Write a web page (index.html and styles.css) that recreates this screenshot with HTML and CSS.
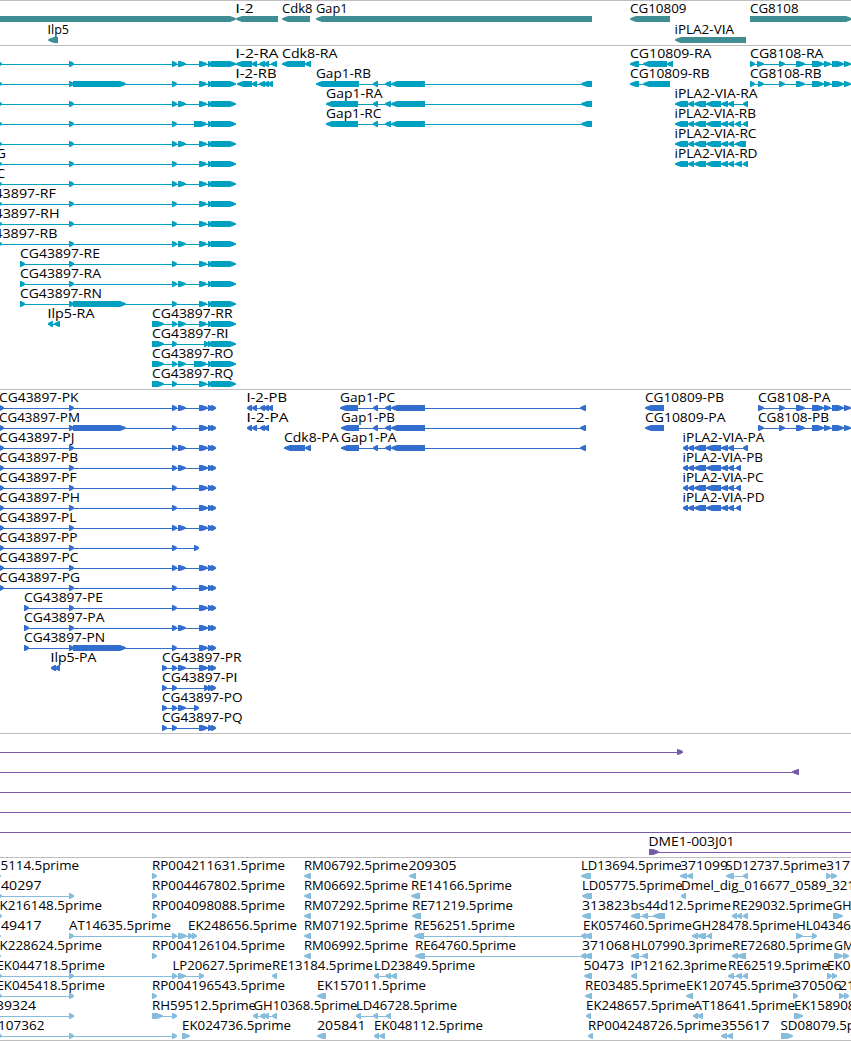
FILE: index.html
```html
<!DOCTYPE html>
<html lang="en">
<head>
<meta charset="utf-8">
<title>Genome tracks</title>
<link rel="stylesheet" href="styles.css">
</head>
<body>
<main class="browser">
  <section class="track track-genes"><svg id="genes" width="851" height="44"></svg></section>
  <section class="track track-transcripts"><svg id="transcripts" width="851" height="343"></svg></section>
  <section class="track track-cds"><svg id="cds" width="851" height="343"></svg></section>
  <section class="track track-clones"><svg id="clones" width="851" height="123"></svg></section>
  <section class="track track-ests"><svg id="ests" width="851" height="182"></svg></section>
</main>
<script src="tracks.js"></script>
</body>
</html>
```
FILE: styles.css
```css
body {
  margin: 0;
  background: #fff;
}

.browser {
  display: flex;
  flex-direction: column;
  width: 851px;
  height: 1041px;
  overflow: hidden;
  box-sizing: border-box;
  border-bottom: 1px solid #bebebe;
}

.track {
  flex: none;
  border-top: 1px solid #bebebe;
}

.track svg {
  display: block;
  overflow: hidden;
}

.track-genes { color: #408e94; }
.track-transcripts { color: #00a0c0; }
.track-cds { color: #326ecd; }
.track-clones { color: #785aaa; }
.track-ests { color: #87bddc; }

.label {
  font-family: "Open Sans", "DejaVu Sans", sans-serif;
  font-size: 12.5px;
  fill: #000;
}

.stem {
  font-family: "Liberation Sans", sans-serif;
}

.glyph {
  fill: currentColor;
}
```
FILE: tracks.js
```javascript
// Feature: row | strand | exons "a_b a_b" | label | label x | label end | line [a, b]
const F = (row, strand, exons, label, lx, le, line) => ({ row, strand, exons, label, lx, le, line });

const NS = 'http://www.w3.org/2000/svg';
function add(svg, name, attrs, text) {
  const el = document.createElementNS(NS, name);
  for (const k in attrs) el.setAttribute(k, attrs[k]);
  if (text) el.textContent = text;
  svg.appendChild(el);
  return el;
}

function draw(id, first, pitch, features) {
  const svg = document.getElementById(id);
  for (const f of features) {
    const top = first + pitch * f.row;
    const spans = f.exons ? f.exons.split(' ').map(s => s.split('_').map(Number)) : [];
    const line = f.line || (spans.length > 1 ? [spans[0][0], spans[spans.length - 1][1]] : null);
    if (line) {
      add(svg, 'rect', { class: 'glyph', x: line[0], y: top + 3, width: line[1] - line[0], height: 1 });
    }
    for (const [a, b] of spans) {
      const s = f.strand > 0 ? 1 : -1;
      const base = s > 0 ? a : b;
      const tip = s > 0 ? b : a;
      const knee = base + s * Math.max(1, b - a - 6);
      const mid = (knee + tip) / 2 + s * 0.5;
      const pts = [
        [base, top], [knee, top], [mid, top + 1.2], [tip, top + 2.4],
        [tip, top + 3.6], [mid, top + 4.8], [knee, top + 6], [base, top + 6]
      ];
      add(svg, 'polygon', { class: 'glyph', points: pts.map(p => p.join(',')).join(' ') });
    }
    if (f.label) {
      const text = add(svg, 'text', {
        class: 'label', x: f.lx, y: top - 3,
        textLength: f.le - f.lx + 0.5, lengthAdjust: 'spacingAndGlyphs'
      });
      // Capital I is set without serifs
      for (const part of f.label.split(/(I)/)) {
        if (part === 'I') add(text, 'tspan', { class: 'stem' }, part);
        else if (part) text.appendChild(document.createTextNode(part));
      }
    }
  }
}

draw('genes', 15, 21, [
  F(0, 1, '-20_236'),
  F(0, -1, '236_278', 'I-2', 235.5, 253),
  F(0, -1, '282_310', 'Cdk8', 282, 312),
  F(0, -1, '316_592', 'Gap1', 316, 347),
  F(0, -1, '630_670', 'CG10809', 630, 686),
  F(0, 1, '750_852', 'CG8108', 750, 798),
  F(1, -1, '48_58', 'Ilp5', 47.5, 68.5),
  F(1, -1, '675_746', 'iPLA2-VIA', 674.5, 733.5)
]);

// Shared exon groups of CG43897
const M = ' 172_177', N = M + ' 178_186';
const RT = ' 199_207 208_212 211_236', PT = ' 199_208 208_213 211_216';
const R0 = '-3_2 69_74', P0 = '-1_4 69_74';
const GAP = ' 373_378 385_391 391_425';
const VIA = ' 688_694 694_706 706_721 721_728 728_734';
const E8 = ' 779_785 796_805 812_824 824_831 832_844 844_851';

draw('transcripts', 15, 20, [
  F(0, 1, R0 + N + RT),
  F(1, 1, R0 + ' 73_126' + M + RT),
  F(2, 1, R0 + N + RT),
  F(3, 1, R0 + M + ' 194_207 208_212 211_236'),
  F(4, 1, R0 + N + RT),
  F(5, 1, R0 + M + RT, 'CG43897-RG', -74, 5.5),
  F(6, 1, R0 + N + RT, 'CG43897-RC', -74, 4.5),
  F(7, 1, R0 + M + RT, 'CG43897-RF', -25, 55.5),
  F(8, 1, R0 + M + RT, 'CG43897-RH', -25, 59),
  F(9, 1, R0 + N + RT, 'CG43897-RB', -25, 57),
  F(10, 1, '20_25 69_74' + M + RT, 'CG43897-RE', 20, 99.5),
  F(11, 1, '20_25 69_74' + N + RT, 'CG43897-RA', 20, 100.5),
  F(12, 1, '20_25 69_74 73_126' + M + RT, 'CG43897-RN', 20, 101.5),
  F(13, 1, '152_164' + N + RT, 'CG43897-RR', 152, 232),
  F(14, 1, '152_164' + M + ' 204_209 208_212 211_236', 'CG43897-RI', 152, 228),
  F(15, 1, '152_164' + N + ' 194_207 208_212 211_236', 'CG43897-RO', 152, 233),
  F(16, 1, '152_164' + M + RT, 'CG43897-RQ', 152, 233),
  F(13, -1, '48_53 54_60', 'Ilp5-RA', 47.5, 94),
  F(0, -1, '236_252 252_257 259_265 264_269 271_277', 'I-2-RA', 235.5, 278),
  F(1, -1, '237_252 252_257 259_265 264_269 268_273', 'I-2-RB', 235.5, 276),
  F(0, -1, '282_305 305_311', 'Cdk8-RA', 282, 337),
  F(1, -1, '316_359' + GAP + ' 581_592', 'Gap1-RB', 316, 370.5),
  F(2, -1, '326_358' + GAP + ' 581_592', 'Gap1-RA', 326, 382),
  F(3, -1, '326_358' + GAP + ' 581_592', 'Gap1-RC', 326, 381),
  F(0, -1, '630_639 643_667 667_673', 'CG10809-RA', 630, 711),
  F(1, -1, '630_639 643_670', 'CG10809-RB', 630, 709),
  F(2, -1, '675_688' + VIA + ' 743_748', 'iPLA2-VIA-RA', 674.5, 757),
  F(3, -1, '675_688' + VIA + ' 735_741 743_748', 'iPLA2-VIA-RB', 674.5, 755.5),
  F(4, -1, '675_688' + VIA + ' 735_746', 'iPLA2-VIA-RC', 674.5, 756),
  F(5, -1, '675_688' + VIA + ' 735_742 743_748', 'iPLA2-VIA-RD', 674.5, 757),
  F(0, 1, '750_755 757_764' + E8, 'CG8108-RA', 750, 823),
  F(1, 1, '750_755 758_764' + E8, 'CG8108-RB', 750, 821)
]);

draw('cds', 15, 20, [
  F(0, 1, P0 + N + PT, 'CG43897-PK', -1, 78),
  F(1, 1, P0 + ' 73_126' + M + PT, 'CG43897-PM', -1, 79.5),
  F(2, 1, P0 + N + PT, 'CG43897-PJ', -1, 74),
  F(3, 1, P0 + N + PT, 'CG43897-PB', -1, 77.5),
  F(4, 1, P0 + M + PT, 'CG43897-PF', -1, 76),
  F(5, 1, P0 + M + PT, 'CG43897-PH', -1, 79.5),
  F(6, 1, P0 + N + PT, 'CG43897-PL', -1, 76),
  F(7, 1, P0 + M + ' 194_199', 'CG43897-PP', -1, 77),
  F(8, 1, P0 + N + PT, 'CG43897-PC', -1, 78),
  F(9, 1, P0 + M + PT, 'CG43897-PG', -1, 79.5),
  F(10, 1, '24_29 69_74' + M + PT, 'CG43897-PE', 24, 102.5),
  F(11, 1, '24_29 69_74' + N + PT, 'CG43897-PA', 24, 104),
  F(12, 1, '24_29 69_74 73_126' + M + PT, 'CG43897-PN', 24, 104.5),
  F(13, 1, '162_167' + N + PT, 'CG43897-PR', 162, 241),
  F(14, 1, '162_167' + M + ' 204_209 208_213 211_216', 'CG43897-PI', 162, 237),
  F(15, 1, '162_167' + N + ' 194_199', 'CG43897-PO', 162, 242),
  F(16, 1, '162_167' + M + PT, 'CG43897-PQ', 162, 242),
  F(13, -1, '51_56 55_60', 'Ilp5-PA', 50.5, 96),
  F(0, -1, '247_252 252_257 260_265 264_269 268_273', 'I-2-PB', 246.5, 286.5),
  F(1, -1, '247_252 252_257 260_265 264_269', 'I-2-PA', 246.5, 288),
  F(2, -1, '284_305 305_311', 'Cdk8-PA', 284, 338),
  F(0, -1, '340_358' + GAP + ' 580_586', 'Gap1-PC', 340, 394.5),
  F(1, -1, '341_359' + GAP + ' 580_586', 'Gap1-PB', 341, 394.5),
  F(2, -1, '341_359' + GAP + ' 580_586', 'Gap1-PA', 341, 396),
  F(0, -1, '645_664', 'CG10809-PB', 645, 723.5),
  F(1, -1, '645_664', 'CG10809-PA', 645, 725),
  F(2, -1, '683_688' + VIA + ' 743_748', 'iPLA2-VIA-PA', 682.5, 764),
  F(3, -1, '683_688' + VIA + ' 736_741', 'iPLA2-VIA-PB', 682.5, 762.5),
  F(4, -1, '683_688' + VIA + ' 736_741', 'iPLA2-VIA-PC', 682.5, 763),
  F(5, -1, '683_688' + VIA + ' 736_741', 'iPLA2-VIA-PD', 682.5, 764),
  F(0, 1, '758_764' + E8, 'CG8108-PA', 758, 830),
  F(1, 1, '758_764' + E8, 'CG8108-PB', 758, 828.5)
]);

draw('clones', 15, 20, [
  F(0, 1, '677_683', null, 0, 0, [0, 683]),
  F(1, -1, '792_799', null, 0, 0, [0, 799]),
  F(2, 1, null, null, 0, 0, [0, 851]),
  F(3, 1, null, null, 0, 0, [0, 851]),
  F(4, 1, null, null, 0, 0, [0, 851]),
  F(5, 1, '649_659', 'DME1-003J01', 648.5, 734, [649, 851])
]);

draw('ests', 15, 20, [
  F(0, 1, '-4_1', '5114.5prime', 0.5, 78.5),
  F(0, 1, '152_157', 'RP004211631.5prime', 152, 284.5),
  F(0, -1, '304_311', 'RM06792.5prime', 304, 407.5),
  F(0, -1, '409_416', '209305', 408.5, 456),
  F(0, -1, '581_591', 'LD13694.5prime', 581, 681),
  F(0, -1, '680_687 687_693', '371099', 680, 727.5),
  F(0, -1, '726_734 743_748', 'SD12737.5prime', 725.5, 826),
  F(0, 1, '826_831 831_837', '317', 826, 849.5),

  F(1, 1, '-3_2 69_74', '40297', 1, 41),
  F(1, 1, '152_157', 'RP004467802.5prime', 152, 284.5),
  F(1, -1, '304_311', 'RM06692.5prime', 304, 407.5),
  F(1, -1, '411_420', 'RE14166.5prime', 411, 511.5),
  F(1, -1, '582_592', 'LD05775.5prime', 582, 682),
  F(1, -1, '681_686', 'Dmel_dig_016677_0589_321', 681, 854.5),

  F(2, 1, '-3_2', 'K216148.5prime', -0.5, 101.5),
  F(2, 1, '152_157', 'RP004098088.5prime', 152, 284.5),
  F(2, -1, '304_311', 'RM07292.5prime', 304, 407.5),
  F(2, -1, '412_421', 'RE71219.5prime', 412, 512.5),
  F(2, -1, '582_591', '313823', 582, 629.5),
  F(2, -1, '631_640 642_648 653_665', 'bs44d12.5prime', 630.5, 730.5),
  F(2, -1, '732_737 737_742 743_748', 'RE29032.5prime', 732, 832.5),
  F(2, 1, '833_843', 'GH', 833, 851),

  F(3, 1, '-4_1', '49417', 1, 41),
  F(3, 1, '69_74 172_177 178_187 188_193 192_197', 'AT14635.5prime', 69, 170.5),
  F(3, 1, null, 'EK248656.5prime', 188, 296.5),
  F(3, -1, '304_311', 'RM07192.5prime', 304, 407.5),
  F(3, -1, '414_424 581_586 584_592', 'RE56251.5prime', 414, 514.5),
  F(3, 1, null, 'EK057460.5prime', 583, 691.5),
  F(3, -1, '692_698 697_706 707_712', 'GH28478.5prime', 692, 795.5),
  F(3, 1, '796_803 812_817', 'HL04346', 796, 850.5),

  F(4, 1, '-4_1', 'K228624.5prime', -0.5, 101.5),
  F(4, 1, '152_157', 'RP004126104.5prime', 152, 284.5),
  F(4, -1, '304_311', 'RM06992.5prime', 304, 407.5),
  F(4, -1, '415_425 581_586 584_592', 'RE64760.5prime', 415, 515.5),
  F(4, 1, null, '371068', 582, 629.5),
  F(4, -1, '631_639 642_648', 'HL07990.3prime', 631, 731.5),
  F(4, -1, '732_738 737_746', 'RE72680.5prime', 732, 832.5),
  F(4, 1, '834_843 843_849', 'GM', 834, 853.5),

  F(5, 1, '-3_2 69_74 172_177 178_186 199_204', 'EK044718.5prime', -3.5, 104.5),
  F(5, 1, null, 'LP20627.5prime', 172.5, 271.5),
  F(5, -1, '272_277', 'RE13184.5prime', 272, 372.5),
  F(5, -1, '374_379 385_391 391_397', 'LD23849.5prime', 374, 474.5),
  F(5, -1, '584_592', '50473', 583.5, 623.5),
  F(5, -1, '631_637', 'IP12162.3prime', 630.5, 726.5),
  F(5, -1, '728_734 736_742 743_748', 'RE62519.5prime', 728, 828.5),
  F(5, 1, '827_832 832_837', 'EK0', 827, 850),

  F(6, 1, '-3_2 69_74', 'EK045418.5prime', -3.5, 104.5),
  F(6, 1, '152_157', 'RP004196543.5prime', 152, 284.5),
  F(6, -1, '317_326', 'EK157011.5prime', 317, 425.5),
  F(6, -1, '585_592', 'RE03485.5prime', 585, 685.5),
  F(6, -1, '686_693', 'EK120745.5prime', 686, 794.5),
  F(6, 1, '793_798', '370506', 793, 841),
  F(6, 1, '839_844 844_849', '21', 839, 854.5),

  F(7, 1, '-5_0 69_74', '39324', -4, 35.5),
  F(7, 1, '152_163 172_177', 'RH59512.5prime', 152, 255.5),
  F(7, -1, '253_258 260_265 264_269 272_277', 'GH10368.5prime', 253.5, 357),
  F(7, -1, '356_361 373_378 386_391', 'LD46728.5prime', 356, 456.5),
  F(7, -1, '586_591', 'EK248657.5prime', 586, 694.5),
  F(7, -1, '693_698 697_703', 'AT18641.5prime', 693.5, 794.5),
  F(7, 1, '794_803', 'EK158908', 794, 855),

  F(8, 1, '-3_2 69_74 172_177', '107362', -2, 44),
  F(8, 1, '182_190', 'EK024736.5prime', 182, 290.5),
  F(8, -1, '317_326', '205841', 317, 365),
  F(8, -1, '374_379 379_385', 'EK048112.5prime', 374, 482.5),
  F(8, -1, '588_593', 'RP004248726.5prime', 588, 720.5),
  F(8, -1, '721_727 727_733', '355617', 721, 769),
  F(8, 1, '781_793', 'SD08079.5p', 780.5, 854.5)
]);
```
